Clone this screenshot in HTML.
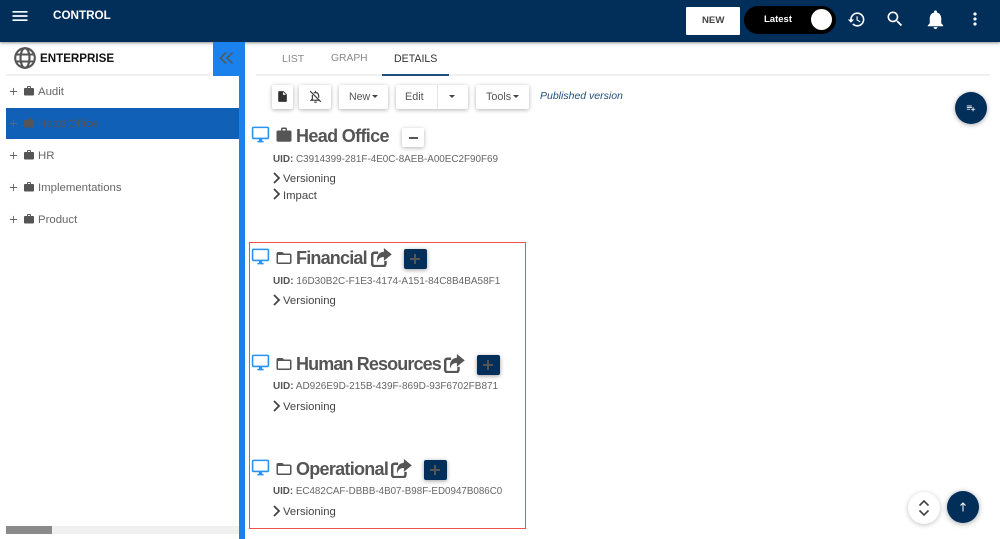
<!DOCTYPE html>
<html><head><meta charset="utf-8"><style>
*{box-sizing:border-box}
html,body{margin:0;padding:0;width:1000px;height:539px;overflow:hidden;background:#fff;font-family:"Liberation Sans",sans-serif}
.a{position:absolute}
.t{position:absolute;white-space:nowrap;line-height:1}
svg{position:absolute;display:block}
.btn{position:absolute;background:#fff;box-shadow:0 1px 4px rgba(0,0,0,.3);border-radius:2px}
.side{font-size:11.4px;color:#666}
.h{font-size:18px;font-weight:bold;color:#555;letter-spacing:-.65px}
.uid{font-size:9.9px;color:#666}
.uid b{color:#555}
.v{font-size:11.3px;color:#444}
.plus{position:absolute;width:23px;height:20px;background:#012f5a;border-radius:2px;box-shadow:0 1px 4px rgba(0,0,0,.4)}
</style></head><body>
<svg width="0" height="0" style="position:absolute"><defs>
<symbol id="work" viewBox="0 0 24 24"><path d="M20 6h-4V4c0-1.110-.89-2-2-2h-4c-1.110 0-2 .89-2 2v2H4c-1.110 0-1.990.89-1.990 2L2 19c0 1.110.89 2 2 2h16c1.110 0 2-.89 2-2V8c0-1.110-.89-2-2-2zm-6 0h-4V4h4v2z"/></symbol>
<symbol id="desk" viewBox="0 0 24 24"><path d="M21 2H3c-1.100 0-2 .9-2 2v12c0 1.100.9 2 2 2h7v2H8v2h8v-2h-2v-2h7c1.100 0 2-.9 2-2V4c0-1.100-.9-2-2-2zm0 14H3V4h18v12z"/></symbol>
<symbol id="folder" viewBox="0 0 24 24"><path fill="#555" d="M20 6h-8l-2-2H4c-1.100 0-1.990.9-1.990 2L2 18c0 1.100.9 2 2 2h16c1.100 0 2-.9 2-2V8c0-1.100-.9-2-2-2zm0 12H4V8h16v10z"/></symbol>
<symbol id="share" viewBox="0 0 22 20"><path d="M7.500 5H3.500C2.100 5 1.200 5.900 1.200 7.300v9.400c0 1.400.9 2.300 2.300 2.300h9.400c1.400 0 2.300-.9 2.300-2.300V13.500" fill="none" stroke="#555" stroke-width="2.600"/><path d="M13.500 0L21.800 6.700L13.500 13.400V9.500C10 9.500 7.500 10.800 6.500 15.500C5.200 9 8 4.300 13.500 3.900z" fill="#555"/></symbol>
<symbol id="chev" viewBox="0 0 10 12"><path d="M2 1l5 5-5 5" fill="none" stroke="#444" stroke-width="1.800"/></symbol>
<symbol id="pl" viewBox="0 0 10 10"><path d="M5 1v8M1 5h8" fill="none" stroke="#666" stroke-width="1"/></symbol>
</defs></svg>

<!-- header -->
<div class="a" style="left:0;top:0;width:1000px;height:42px;background:#012f5a;box-shadow:0 1px 3px rgba(0,0,0,.45)"></div>
<svg style="left:10px;top:6px" width="20" height="20" viewBox="0 0 24 24" fill="#fff"><path d="M3 18h18v-2H3v2zm0-5h18v-2H3v2zm0-7v2h18V6H3z"/></svg>
<div class="t" style="left:53px;top:10px;font-size:11.700px;font-weight:bold;color:#fff">CONTROL</div>
<div class="a" style="left:686px;top:7px;width:54px;height:28px;background:#fff;border-radius:1px"></div>
<div class="t" style="left:702px;top:16px;font-size:9.600px;font-weight:bold;color:#444">NEW</div>
<div class="a" style="left:744px;top:6px;width:92px;height:28px;background:#000;border-radius:14px"></div>
<div class="t" style="left:764px;top:15px;font-size:9.500px;font-weight:bold;color:#fff">Latest</div>
<div class="a" style="left:811px;top:9px;width:21px;height:21px;background:#fff;border-radius:50%"></div>
<svg style="left:847px;top:10px" width="19" height="19" viewBox="0 0 24 24" fill="#fff"><path d="M13 3c-4.970 0-9 4.030-9 9H1l3.890 3.890.070.140L9 12H6c0-3.870 3.130-7 7-7s7 3.130 7 7-3.130 7-7 7c-1.930 0-3.680-.790-4.940-2.060l-1.420 1.420C8.270 19.990 10.510 21 13 21c4.970 0 9-4.030 9-9s-4.030-9-9-9zm-1 5v5l4.280 2.540.720-1.210-3.500-2.080V8H12z"/></svg>
<svg style="left:885px;top:9px" width="20" height="20" viewBox="0 0 24 24" fill="#fff"><path d="M15.500 14h-.790l-.280-.270C15.410 12.590 16 11.110 16 9.500 16 5.910 13.090 3 9.500 3S3 5.910 3 9.500 5.910 16 9.500 16c1.610 0 3.090-.590 4.230-1.570l.270.280v.790l5 4.990L20.490 19l-4.990-5zm-6 0C7.010 14 5 11.990 5 9.500S7.010 5 9.500 5 14 7.010 14 9.500 11.990 14 9.500 14z"/></svg>
<svg style="left:924px;top:8px" width="23" height="23" viewBox="0 0 24 24" fill="#fff"><path d="M12 22c1.100 0 2-.9 2-2h-4c0 1.100.89 2 2 2zm6-6v-5c0-3.070-1.640-5.640-4.500-6.320V4c0-.830-.670-1.500-1.500-1.500s-1.500.670-1.500 1.500v.680C7.630 5.360 6 7.920 6 11v5l-2 2v1h16v-1l-2-2z"/></svg>
<svg style="left:965px;top:9px" width="20" height="20" viewBox="0 0 24 24" fill="#fff"><path d="M12 8c1.100 0 2-.9 2-2s-.9-2-2-2-2 .9-2 2 .9 2 2 2zm0 2c-1.100 0-2 .9-2 2s.9 2 2 2 2-.9 2-2-.9-2-2-2zm0 6c-1.100 0-2 .9-2 2s.9 2 2 2 2-.9 2-2-.9-2-2-2z"/></svg>

<!-- sidebar -->
<svg style="left:14px;top:47px" width="22" height="22" viewBox="0 0 22 22" fill="none" stroke="#555" stroke-width="2.100"><circle cx="11" cy="11" r="9.800"/><ellipse cx="11" cy="11" rx="4.500" ry="9.800"/><path d="M2 7.500h18M2 14.500h18"/></svg>
<div class="t" style="left:40px;top:53px;font-size:11.600px;font-weight:bold;color:#111">ENTERPRISE</div>
<div class="a" style="left:6px;top:74px;width:204px;height:2px;background:#f0f0f0"></div>
<div class="a" style="left:213px;top:42px;width:26px;height:34px;background:#1a81ed"></div>
<svg style="left:219px;top:51px" width="15" height="14" viewBox="0 0 15 14" fill="none" stroke="#555" stroke-width="1.500"><path d="M7 1.500L1.500 7 7 12.500M13.500 1.500L8 7l5.500 5.500"/></svg>
<div class="a" style="left:239px;top:42px;width:6px;height:497px;background:#1a81ed"></div>

<svg style="left:9px;top:87px" width="9" height="9"><use href="#pl"/></svg>
<svg style="left:23px;top:85px" width="12" height="12" fill="#555"><use href="#work"/></svg>
<div class="t side" style="left:38px;top:87px">Audit</div>

<div class="a" style="left:6px;top:108px;width:233px;height:31px;background:#1060b8"></div>
<svg style="left:9px;top:119px" width="9" height="9"><use href="#pl"/></svg>
<svg style="left:23px;top:117px" width="12" height="12" fill="#555"><use href="#work"/></svg>
<div class="t side" style="left:38px;top:119px;color:#555">Head Office</div>

<svg style="left:9px;top:151px" width="9" height="9"><use href="#pl"/></svg>
<svg style="left:23px;top:149px" width="12" height="12" fill="#555"><use href="#work"/></svg>
<div class="t side" style="left:38px;top:151px">HR</div>

<svg style="left:9px;top:183px" width="9" height="9"><use href="#pl"/></svg>
<svg style="left:23px;top:181px" width="12" height="12" fill="#555"><use href="#work"/></svg>
<div class="t side" style="left:38px;top:183px">Implementations</div>

<svg style="left:9px;top:215px" width="9" height="9"><use href="#pl"/></svg>
<svg style="left:23px;top:213px" width="12" height="12" fill="#555"><use href="#work"/></svg>
<div class="t side" style="left:38px;top:215px">Product</div>

<div class="a" style="left:6px;top:526px;width:233px;height:8px;background:#f0f0f0"></div>
<div class="a" style="left:6px;top:526px;width:46px;height:8px;background:#8a8a8a"></div>

<!-- tabs -->
<div class="t" style="left:282px;top:54px;font-size:10.500px;color:#888">LIST</div>
<div class="t" style="left:331px;top:54px;font-size:10.300px;color:#888">GRAPH</div>
<div class="t" style="left:394px;top:54px;font-size:10.600px;color:#333">DETAILS</div>
<div class="a" style="left:256px;top:74px;width:734px;height:2px;background:#f0f0f0"></div>
<div class="a" style="left:382px;top:74px;width:67px;height:2px;background:#1f4f7f"></div>

<!-- toolbar -->
<div class="btn" style="left:272px;top:85px;width:21px;height:24px"></div>
<svg style="left:276px;top:90px" width="13" height="13" viewBox="0 0 24 24" fill="#333"><path d="M14 2H6c-1.100 0-1.990.9-1.990 2L4 20c0 1.100.89 2 1.990 2H18c1.100 0 2-.9 2-2V8l-6-6zm-1 7V3.500L18.500 9H13z"/></svg>
<div class="btn" style="left:299px;top:85px;width:32px;height:24px"></div>
<svg style="left:308px;top:89px" width="15" height="15" viewBox="0 0 24 24" fill="none" stroke="#444" stroke-width="2"><path d="M7 9.500V16l-2 2h14M17 14v-3c0-3-2-5.500-5-5.500-1.200 0-2.200.4-3 1M12 3v2M10 21h4M3.500 3.500l17 17"/></svg>
<div class="btn" style="left:339px;top:85px;width:49px;height:24px"></div>
<div class="t" style="left:349px;top:92px;font-size:10.600px;color:#555">New</div>
<div class="a" style="left:372px;top:95px;border:3.500px solid transparent;border-top-color:#444;border-bottom:0"></div>
<div class="btn" style="left:396px;top:85px;width:72px;height:24px"></div>
<div class="a" style="left:437px;top:85px;width:1px;height:24px;background:#e4e4e4"></div>
<div class="t" style="left:405px;top:92px;font-size:10.800px;color:#555">Edit</div>
<div class="a" style="left:449px;top:95px;border:3.500px solid transparent;border-top-color:#444;border-bottom:0"></div>
<div class="btn" style="left:476px;top:85px;width:53px;height:24px"></div>
<div class="t" style="left:486px;top:92px;font-size:10.800px;color:#555">Tools</div>
<div class="a" style="left:513px;top:95px;border:3.500px solid transparent;border-top-color:#444;border-bottom:0"></div>
<div class="t" style="left:540px;top:91px;font-size:10.500px;font-style:italic;color:#1f4f7f">Published version</div>

<!-- head office -->
<svg style="left:251px;top:125px" width="19" height="19" fill="#2a93f0"><use href="#desk"/></svg>
<svg style="left:275px;top:126px" width="18" height="18" fill="#555"><use href="#work"/></svg>
<div class="t h" style="left:296px;top:127px">Head Office</div>
<div class="btn" style="left:402px;top:128px;width:22px;height:19px"></div>
<div class="a" style="left:409px;top:137px;width:9px;height:2px;background:#555"></div>
<div class="t uid" style="left:273px;top:155px"><b>UID:</b> C3914399-281F-4E0C-8AEB-A00EC2F90F69</div>
<svg style="left:272px;top:172px" width="10" height="12"><use href="#chev"/></svg>
<div class="t v" style="left:283px;top:174px">Versioning</div>
<svg style="left:272px;top:188px" width="10" height="12"><use href="#chev"/></svg>
<div class="t v" style="left:283px;top:191px">Impact</div>

<!-- red box -->
<div class="a" style="left:249px;top:242px;width:277px;height:287px;border:1px solid #f0504a"></div>

<!-- Financial -->
<svg style="left:251px;top:247px" width="19" height="19" fill="#2a93f0"><use href="#desk"/></svg>
<svg style="left:275px;top:249px" width="18" height="18"><use href="#folder"/></svg>
<div class="t h" style="left:296px;top:249px;letter-spacing:-.8px">Financial</div>
<svg style="left:371px;top:248px" width="21" height="19"><use href="#share"/></svg>
<div class="plus" style="left:404px;top:249px"></div>
<svg style="left:410px;top:254px" width="10" height="10"><path d="M5 0v10M0 5h10" stroke="#555" stroke-width="2"/></svg>
<div class="t uid" style="left:273px;top:277px;font-size:10px"><b>UID:</b> 16D30B2C-F1E3-4174-A151-84C8B4BA58F1</div>
<svg style="left:272px;top:294px" width="10" height="12"><use href="#chev"/></svg>
<div class="t v" style="left:283px;top:296px">Versioning</div>

<!-- Human Resources -->
<svg style="left:251px;top:353px" width="19" height="19" fill="#2a93f0"><use href="#desk"/></svg>
<svg style="left:275px;top:355px" width="18" height="18"><use href="#folder"/></svg>
<div class="t h" style="left:296px;top:355px;letter-spacing:-.88px">Human Resources</div>
<svg style="left:444px;top:354px" width="21" height="19"><use href="#share"/></svg>
<div class="plus" style="left:477px;top:355px"></div>
<svg style="left:483px;top:360px" width="10" height="10"><path d="M5 0v10M0 5h10" stroke="#555" stroke-width="2"/></svg>
<div class="t uid" style="left:273px;top:382px;font-size:10px"><b>UID:</b> AD926E9D-215B-439F-869D-93F6702FB871</div>
<svg style="left:272px;top:400px" width="10" height="12"><use href="#chev"/></svg>
<div class="t v" style="left:283px;top:402px">Versioning</div>

<!-- Operational -->
<svg style="left:251px;top:458px" width="19" height="19" fill="#2a93f0"><use href="#desk"/></svg>
<svg style="left:275px;top:460px" width="18" height="18"><use href="#folder"/></svg>
<div class="t h" style="left:296px;top:460px;letter-spacing:-.72px">Operational</div>
<svg style="left:391px;top:459px" width="21" height="19"><use href="#share"/></svg>
<div class="plus" style="left:424px;top:460px"></div>
<svg style="left:430px;top:465px" width="10" height="10"><path d="M5 0v10M0 5h10" stroke="#555" stroke-width="2"/></svg>
<div class="t uid" style="left:273px;top:487px;font-size:9.800px"><b>UID:</b> EC482CAF-DBBB-4B07-B98F-ED0947B086C0</div>
<svg style="left:272px;top:505px" width="10" height="12"><use href="#chev"/></svg>
<div class="t v" style="left:283px;top:507px">Versioning</div>

<!-- FABs -->
<div class="a" style="left:955px;top:92px;width:32px;height:32px;border-radius:50%;background:#012f5a;box-shadow:0 1px 5px rgba(0,0,0,.35)"></div>
<svg style="left:966px;top:103px" width="10" height="10" viewBox="0 0 24 24" fill="#fff"><path d="M14 10H2v2h12v-2zm0-4H2v2h12V6zm4 8v-4h-2v4h-4v2h4v4h2v-4h4v-2h-4zM2 16h8v-2H2v2z"/></svg>
<div class="a" style="left:908px;top:492px;width:32px;height:32px;border-radius:50%;background:#fff;box-shadow:0 1px 5px rgba(0,0,0,.25)"></div>
<svg style="left:917px;top:499px" width="14" height="18" viewBox="0 0 14 18" fill="none" stroke="#444" stroke-width="1.600"><path d="M2.500 6.500L7 2l4.500 4.500M2.500 11.500L7 16l4.500-4.500"/></svg>
<div class="a" style="left:947px;top:491px;width:32px;height:32px;border-radius:50%;background:#012f5a;box-shadow:0 1px 6px rgba(0,0,0,.35)"></div>
<svg style="left:958px;top:502px" width="10" height="10" viewBox="0 0 10 10" fill="none" stroke="#fff" stroke-width="1"><path d="M5 9.500V1M2.500 3.500L5 1l2.500 2.500"/></svg>
</body></html>
